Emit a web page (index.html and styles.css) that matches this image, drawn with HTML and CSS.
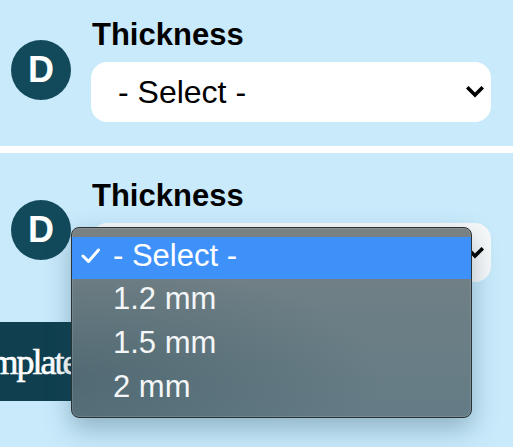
FILE: index.html
```html
<!DOCTYPE html>
<html>
<head>
<meta charset="utf-8">
<link rel="stylesheet" href="styles.css">
</head>
<body>
<div class="panel panel-first">
  <div class="row">
    <div class="badge">D</div>
    <div class="field">
      <div class="label">Thickness</div>
      <div class="select">
        <span class="select-text">- Select -</span>
        <svg class="chevron" width="18" height="12" viewBox="0 0 18 12"><polyline points="2.5,2.5 9,9 15.5,2.5" fill="none" stroke="#000" stroke-width="3.6" stroke-linecap="square"/></svg>
      </div>
    </div>
  </div>
</div>
<div class="divider"></div>
<div class="panel panel-second">
  <div class="row">
    <div class="badge">D</div>
    <div class="field">
      <div class="label">Thickness</div>
      <div class="select select-open">
        <span class="select-text">- Select -</span>
        <svg class="chevron" width="18" height="12" viewBox="0 0 18 12"><polyline points="2.5,2.5 9,9 15.5,2.5" fill="none" stroke="#000" stroke-width="3.6" stroke-linecap="square"/></svg>
      </div>
    </div>
  </div>
  <div class="template-btn">Template</div>
  <div class="menu">
    <div class="menu-item selected">
      <svg class="check" width="20" height="16" viewBox="0 0 20 16"><polyline points="2,8 7.5,13.5 17.5,2" fill="none" stroke="#fff" stroke-width="3" stroke-linecap="round" stroke-linejoin="round"/></svg>
      <span>- Select -</span>
    </div>
    <div class="menu-item"><span>1.2 mm</span></div>
    <div class="menu-item"><span>1.5 mm</span></div>
    <div class="menu-item"><span>2 mm</span></div>
  </div>
</div>
</body>
</html>
```
FILE: styles.css
```css
html, body {
  margin: 0;
  padding: 0;
}
body {
  background: #c8eafb;
  font-family: "Liberation Sans", Arial, sans-serif;
  width: 513px;
  height: 447px;
  overflow: hidden;
}
.panel {
  padding: 25px 0 24px 11px;
}
.panel-first {
  padding-top: 17px;
}
.panel-second {
  position: relative;
  padding-bottom: 0;
}
.row {
  display: flex;
  align-items: center;
  gap: 20px;
}
.badge {
  width: 60px;
  height: 60px;
  border-radius: 50%;
  background: #124a5b;
  color: #fff;
  font-weight: bold;
  font-size: 36px;
  display: flex;
  align-items: center;
  justify-content: center;
  flex: none;
}
.field {
  display: flex;
  flex-direction: column;
}
.label {
  font-weight: bold;
  font-size: 31px;
  line-height: 36px;
  margin-bottom: 9px;
  padding-left: 1px;
  color: #000;
}
.select {
  width: 400px;
  height: 60px;
  background: #fff;
  border-radius: 16px;
  display: flex;
  align-items: center;
  justify-content: space-between;
  padding: 0 7px 0 27px;
  box-sizing: border-box;
}
.select-open {
  height: 59px;
  background: #f7f9fa;
}
.select-text {
  font-size: 32px;
  color: #000;
}
.chevron {
  display: block;
}
.divider {
  height: 7px;
  background: #fff;
}
.template-btn {
  margin-top: 40px;
  margin-left: -63px;
  padding-left: 11px;
  width: 180px;
  height: 79px;
  line-height: 80px;
  background: #10404f;
  color: #fff;
  font-family: "Liberation Serif", "Times New Roman", serif;
  font-size: 36px;
  letter-spacing: -2px;
  -webkit-text-stroke: 0.6px #fff;
  box-sizing: border-box;
  white-space: nowrap;
}
.menu {
  position: absolute;
  left: 71px;
  top: 74px;
  width: 401px;
  height: 191px;
  box-sizing: border-box;
  border: 1px solid #2a3236;
  border-radius: 8px;
  padding-top: 8px;
  background:
    radial-gradient(ellipse at 0% 80%, rgba(40, 70, 80, 0.35), rgba(40, 70, 80, 0) 55%),
    linear-gradient(180deg, #7a8183 0%, #6e7f85 35%, #647c86 100%);
  box-shadow: 0 10px 26px rgba(30, 70, 90, 0.35), inset 0 0 0 1px rgba(255, 255, 255, 0.12);
  overflow: hidden;
}
.menu-item {
  height: 44px;
  display: flex;
  align-items: flex-start;
  padding-left: 41px;
  position: relative;
  color: #f4f6f7;
  font-family: "Liberation Sans", Arial, sans-serif;
  font-size: 31px;
  line-height: 38px;
}
.menu-item.selected {
  background: #3f91fa;
  color: #fff;
  height: 42px;
  margin-top: 1px;
  margin-bottom: 1px;
}
.check {
  position: absolute;
  left: 9px;
  top: 11px;
}
```
